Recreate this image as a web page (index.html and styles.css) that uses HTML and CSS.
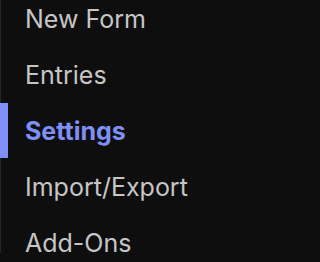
FILE: index.html
```html
<!DOCTYPE html>
<html lang="en">
<head>
    <meta charset="UTF-8">
    <meta name="viewport" content="width=device-width, initial-scale=1.0">
    <title>Forms Menu</title>
    <link rel="stylesheet" href="styles.css">
</head>
<body>
    <nav class="sidebar">
        <ul class="menu">
            <li class="menu-item">New Form</li>
            <li class="menu-item">Entries</li>
            <li class="menu-item active">Settings</li>
            <li class="menu-item">Import/Export</li>
            <li class="menu-item">Add-Ons</li>
        </ul>
    </nav>
</body>
</html>
```

FILE: styles.css
```css
html, body {
    margin: 0;
    padding: 0;
    background-color: #0e0e0e;
    height: 100%;
    overflow: hidden;
}
.sidebar {
    height: 100%;
    border-left: 1px solid #262626;
    font-family: Inter, "Noto Sans", sans-serif;
}
.menu {
    list-style: none;
    margin: -9px 0 0 0;
    padding: 0;
}
.menu-item {
    display: flex;
    align-items: center;
    height: 56px;
    padding-left: 24px;
    font-size: 25px;
    color: #c6c6c6;
    position: relative;
}
.menu-item.active {
    color: #7f8ff6;
    font-weight: 700;
}
.menu-item.active::before {
    content: "";
    position: absolute;
    left: -1px;
    top: 0;
    bottom: 1px;
    width: 8px;
    background-color: #7f8ff6;
}
```
